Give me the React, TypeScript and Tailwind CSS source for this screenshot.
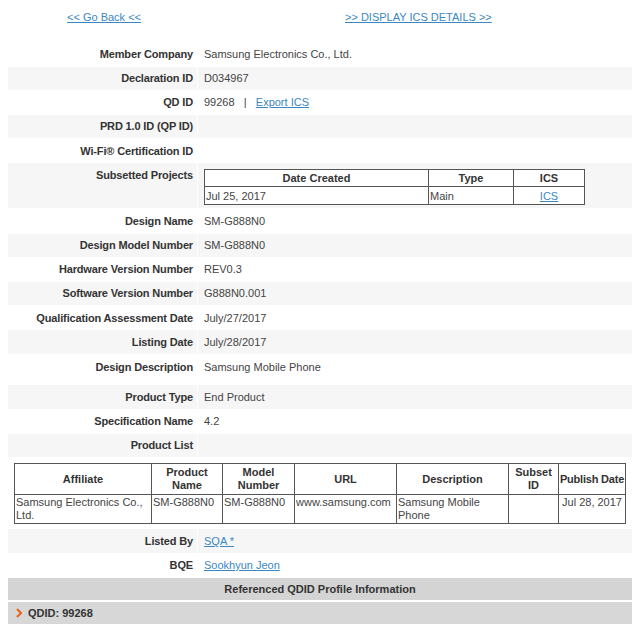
import React from "react";

const link = "text-[#3a87c3] underline";

type Row = { label: string; value?: React.ReactNode; h?: string; top?: boolean };

function InfoRow({ label, value, shade, h = "h-[23.2px]", top }: Row & { shade: boolean }) {
  const bg = shade ? "bg-[#f6f6f6]" : "bg-white";
  return (
    <div className={`flex gap-px ${h}`}>
      <div
        className={`w-[189px] shrink-0 ${bg} pr-[4px] text-right font-bold text-[#333] tracking-[-0.15px] flex justify-end ${
          top ? "items-start pt-[4px]" : "items-center"
        }`}
      >
        {label}
      </div>
      <div className={`flex-1 ${bg} pl-[6px] text-[#444] flex ${top ? "items-start pt-[4px]" : "items-center"}`}>
        {value}
      </div>
    </div>
  );
}

function SubsetTable() {
  return (
    <table className="border-collapse border border-[#555] w-[381px] text-[11px] bg-white">
      <thead>
        <tr className="h-[17px]">
          <th className="border border-[#555] w-[224px] font-bold text-[#333] text-center">Date Created</th>
          <th className="border border-[#555] w-[85px] font-bold text-[#333] text-center">Type</th>
          <th className="border border-[#555] font-bold text-[#333] text-center">ICS</th>
        </tr>
      </thead>
      <tbody>
        <tr className="h-[18px]">
          <td className="border border-[#555] px-[1px] text-[#444]">Jul 25, 2017</td>
          <td className="border border-[#555] px-[1px] text-[#444]">Main</td>
          <td className="border border-[#555] text-center">
            <span className={link}>ICS</span>
          </td>
        </tr>
      </tbody>
    </table>
  );
}

function ProductTable() {
  const th = "border border-[#555] font-bold text-[#333] text-center align-middle leading-[12.5px] px-[1px]";
  const td = "border border-[#555] text-[#444] align-top leading-[13px] px-[1px] pt-[1px]";
  return (
    <table className="border-collapse border border-[#555] w-[612px] text-[11px] bg-white">
      <thead>
        <tr className="h-[31px]">
          <th className={`${th} w-[137px]`}>Affiliate</th>
          <th className={`${th} w-[71px]`}>
            Product
            <br />
            Name
          </th>
          <th className={`${th} w-[72px]`}>
            Model
            <br />
            Number
          </th>
          <th className={`${th} w-[102px]`}>URL</th>
          <th className={`${th} w-[112px]`}>Description</th>
          <th className={`${th} w-[50px]`}>
            Subset
            <br />
            ID
          </th>
          <th className="border border-[#555] font-bold text-[#333] text-center align-middle whitespace-nowrap px-0 tracking-[-0.2px]">
            Publish Date
          </th>
        </tr>
      </thead>
      <tbody>
        <tr className="h-[29px]">
          <td className={td}>
            Samsung Electronics Co.,
            <br />
            Ltd.
          </td>
          <td className={td}>SM-G888N0</td>
          <td className={td}>SM-G888N0</td>
          <td className={td}>www.samsung.com</td>
          <td className={td}>
            Samsung Mobile
            <br />
            Phone
          </td>
          <td className={td}></td>
          <td className={`${td} text-center whitespace-nowrap`}>Jul 28, 2017</td>
        </tr>
      </tbody>
    </table>
  );
}

export default function App() {
  const rowsA: Row[] = [
    { label: "Member Company", value: "Samsung Electronics Co., Ltd." },
    { label: "Declaration ID", value: "D034967" },
    {
      label: "QD ID",
      value: (
        <span>
          99268&nbsp;&nbsp;&nbsp;|&nbsp;&nbsp;&nbsp;<span className={link}>Export ICS</span>
        </span>
      ),
    },
    { label: "PRD 1.0 ID (QP ID)" },
    { label: "Wi-Fi® Certification ID" },
  ];
  const rowsB: Row[] = [
    { label: "Design Name", value: "SM-G888N0" },
    { label: "Design Model Number", value: "SM-G888N0" },
    { label: "Hardware Version Number", value: "REV0.3" },
    { label: "Software Version Number", value: "G888N0.001" },
    { label: "Qualification Assessment Date", value: "July/27/2017" },
    { label: "Listing Date", value: "July/28/2017" },
    { label: "Design Description", value: "Samsung Mobile Phone", h: "h-[29.8px]", top: true },
    { label: "Product Type", value: "End Product" },
    { label: "Specification Name", value: "4.2" },
    { label: "Product List" },
  ];

  return (
    <div className="w-[640px] h-[630px] bg-white text-[11px] overflow-hidden" style={{ fontFamily: '"Liberation Sans", Arial, sans-serif' }}>
      <div className="h-[42.5px] flex items-start pt-[9px]">
        <span className={`${link} ml-[67px]`}>&lt;&lt; Go Back &lt;&lt;</span>
        <span className={`${link} ml-[204px]`}>&gt;&gt; DISPLAY ICS DETAILS &gt;&gt;</span>
      </div>
      <div className="mx-[8px] flex flex-col gap-px">
        {rowsA.map((r, i) => (
          <InfoRow key={r.label} {...r} shade={i % 2 === 1} />
        ))}
        <div className="flex gap-px h-[45px]">
          <div className="w-[189px] shrink-0 bg-[#f6f6f6] pr-[4px] pt-[4px] text-right font-bold text-[#333] tracking-[-0.15px]">
            Subsetted Projects
          </div>
          <div className="flex-1 bg-[#f6f6f6] pl-[6px] pt-[5.5px]">
            <SubsetTable />
          </div>
        </div>
        {rowsB.map((r, i) => (
          <InfoRow key={r.label} {...r} shade={i % 2 === 1} />
        ))}
        <div className="h-[70.4px] bg-white pl-[6px] pt-[5px]">
          <ProductTable />
        </div>
        <InfoRow label="Listed By" value={<span className={link}>SQA *</span>} shade={true} />
        <InfoRow label="BQE" value={<span className={link}>Sookhyun Jeon</span>} shade={false} />
        <div className="h-[22.4px] bg-[#d4d4d4] flex items-center justify-center font-bold text-[#333]">
          Referenced QDID Profile Information
        </div>
        <div className="h-[22px] bg-[#d7d7d7] flex items-center gap-[6px] pl-[8px] font-bold text-[#333] mt-px">
          <svg width="6" height="10" viewBox="0 0 6 10">
            <polyline points="1,1 5,5 1,9" fill="none" stroke="#e8601c" strokeWidth="2" />
          </svg>
          <span>QDID: 99268</span>
        </div>
      </div>
    </div>
  );
}
